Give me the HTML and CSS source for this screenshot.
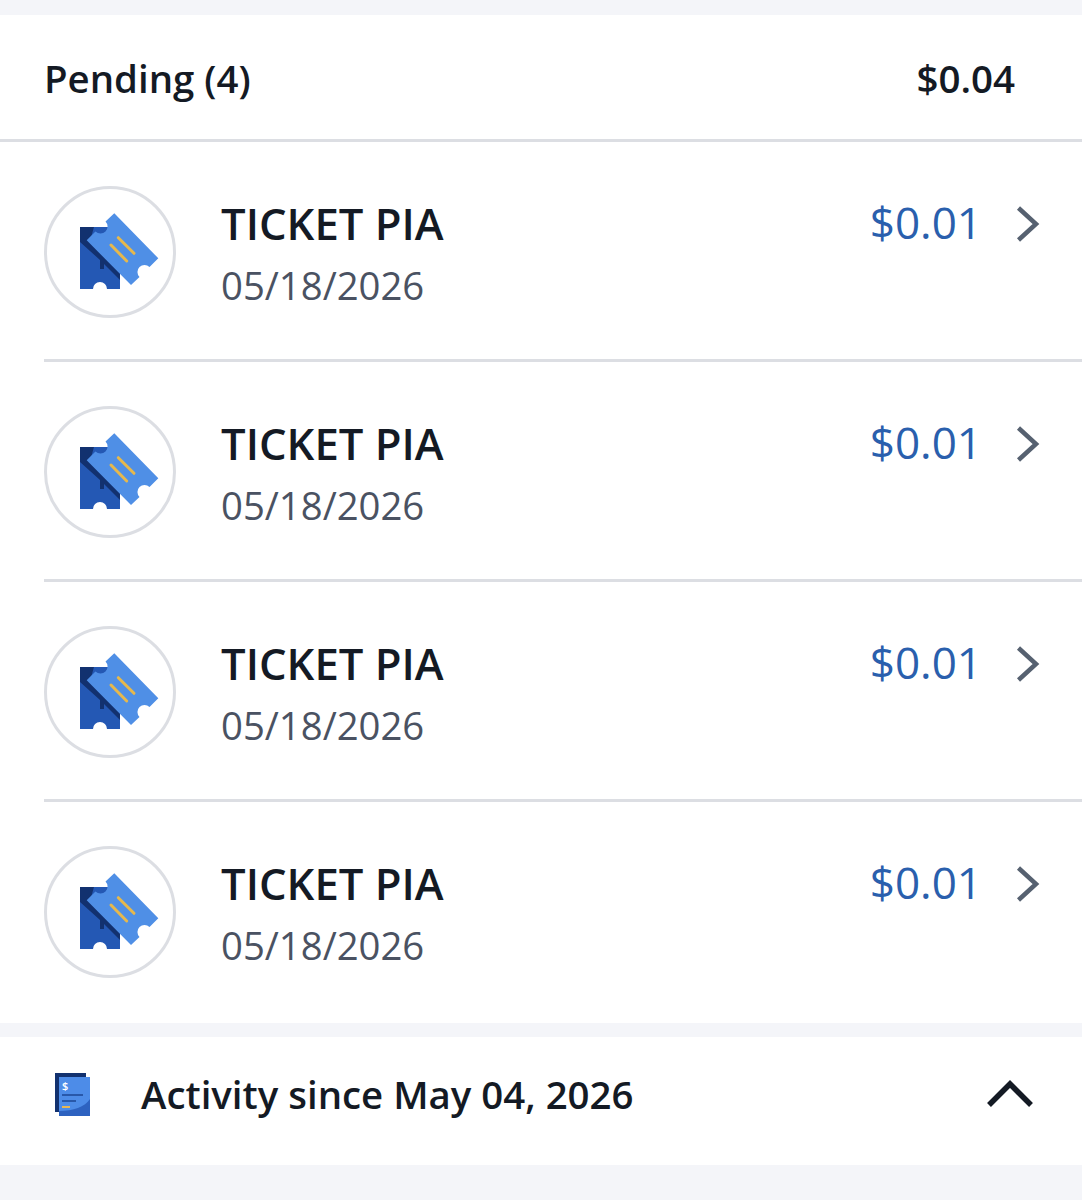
FILE: index.html
```html
<!DOCTYPE html>
<html lang="en">
<head>
<meta charset="utf-8">
<title>Pending</title>
<link rel="stylesheet" href="styles.css">
</head>
<body>
<svg class="defs" width="0" height="0" aria-hidden="true">
  <symbol id="ticket" viewBox="74 206 90 90">
    <path fill="#2458b4" d="M80 226H120V288H107A7 7 0 0 0 93 288H80Z"/>
    <path fill="#12316f" d="M80 226H94L90 240L120 270V279L104 263V268H100V259L80 241Z"/>
    <path fill="#4f8fe6" d="M114.300 212.300L158.300 257.300L149.500 266A7 7 0 0 0 139.500 276L131 284L86.700 239.300L95.500 230.500A7 7 0 0 0 105.500 220.500Z"/>
    <path stroke="#e6b84c" stroke-width="3" stroke-linecap="round" fill="none" d="M118.300 236.700L134 252.300M111 244L126.700 260"/>
  </symbol>
</svg>

<main class="page">
  <section class="card pending">
    <header class="pending-head">
      <h2 class="pending-title">Pending (4)</h2>
      <span class="pending-total">$0.04</span>
    </header>
    <ul class="rows">
      <li class="row">
        <span class="badge"><svg class="ticket"><use href="#ticket"/></svg></span>
        <div class="info"><div class="name">TICKET PIA</div><div class="date">05/18/2026</div></div>
        <span class="amount">$0.01</span>
        <svg class="chev" viewBox="0 0 24 36"><path d="M2.500 2L20 18L2.500 34"/></svg>
      </li>
      <li class="row">
        <span class="badge"><svg class="ticket"><use href="#ticket"/></svg></span>
        <div class="info"><div class="name">TICKET PIA</div><div class="date">05/18/2026</div></div>
        <span class="amount">$0.01</span>
        <svg class="chev" viewBox="0 0 24 36"><path d="M2.500 2L20 18L2.500 34"/></svg>
      </li>
      <li class="row">
        <span class="badge"><svg class="ticket"><use href="#ticket"/></svg></span>
        <div class="info"><div class="name">TICKET PIA</div><div class="date">05/18/2026</div></div>
        <span class="amount">$0.01</span>
        <svg class="chev" viewBox="0 0 24 36"><path d="M2.500 2L20 18L2.500 34"/></svg>
      </li>
      <li class="row">
        <span class="badge"><svg class="ticket"><use href="#ticket"/></svg></span>
        <div class="info"><div class="name">TICKET PIA</div><div class="date">05/18/2026</div></div>
        <span class="amount">$0.01</span>
        <svg class="chev" viewBox="0 0 24 36"><path d="M2.500 2L20 18L2.500 34"/></svg>
      </li>
    </ul>
  </section>

  <section class="card activity">
    <svg class="doc" viewBox="0 0 36 44">
      <rect x="0" y="0" width="31" height="39" fill="#12316f"/>
      <rect x="4" y="4" width="31" height="39" fill="#2d62c0"/>
      <path d="M4 4H35V26C30 34 18 38 4 38Z" fill="#4d8ce8"/>
      <text x="7" y="17" class="doc-dollar">$</text>
      <path d="M7 22H28M7 28H21" stroke="#1c4795" stroke-width="1.500"/>
      <path d="M7 34H15" stroke="#e8b755" stroke-width="2"/>
    </svg>
    <span class="activity-label">Activity since May 04, 2026</span>
    <svg class="caret" viewBox="0 0 48 28"><path d="M3 25L24 4L45 25"/></svg>
  </section>
</main>
</body>
</html>
```

FILE: styles.css
```css
* { box-sizing: border-box; }
html, body { margin: 0; padding: 0; }
body {
  background: #f4f5f9;
  color: #141a24;
  font-family: "Open Sans", "Liberation Sans", sans-serif;
}
.defs { position: absolute; }
.page { display: flex; flex-direction: column; gap: 14px; padding: 15px 0 35px; height: 1200px; }
.card { background: #fff; }

.pending-head {
  display: flex;
  align-items: center;
  justify-content: space-between;
  height: 127px;
  padding: 2px 67px 0 45px;
  border-bottom: 3px solid #dcdee3;
}
.pending-title { margin: 0 0 0 -1px; font-size: 38.400px; font-weight: 600; line-height: 50px; }
.pending-total { font-size: 38.500px; font-weight: 600; line-height: 50px; }

.rows { list-style: none; margin: 0; padding: 0 0 0 44px; }
.row {
  display: flex;
  align-items: flex-start;
  height: 220px;
  padding-top: 44px;
  border-bottom: 3px solid #dcdee3;
}
.row:last-child { border-bottom: 0; height: 221px; }
.badge {
  flex: none;
  width: 132px;
  height: 132px;
  border: 3px solid #dcdee3;
  border-radius: 50%;
  display: flex;
  align-items: center;
  justify-content: center;
}
.ticket { display: block; width: 90px; height: 90px; transform: translate(9px, 0); }
.info { flex: 1; margin-left: 45px; }
.name { font-size: 43.600px; font-weight: 600; line-height: 56px; margin-top: 9px; }
.date { font-size: 38.300px; line-height: 50px; color: #4a5262; margin-top: 9px; }
.amount { font-size: 44px; line-height: 56px; color: #2a5fad; margin-top: 8px; }
.chev { flex: none; width: 24px; height: 36px; margin: 20px 42px 0 34px; }
.chev path { fill: none; stroke: #566170; stroke-width: 4.500; }

.activity { display: flex; align-items: center; height: 128px; padding: 0 48px 0 55px; }
.doc { flex: none; width: 36px; height: 44px; margin-top: -12px; }
.doc-dollar { font-size: 11px; font-weight: 600; fill: #fff; }
.activity-label { flex: 1; margin: -14px 0 0 50px; font-size: 38.400px; font-weight: 600; line-height: 50px; }
.caret { flex: none; width: 48px; height: 28px; margin-top: -14px; }
.caret path { fill: none; stroke: #141a24; stroke-width: 5.500; }
```
